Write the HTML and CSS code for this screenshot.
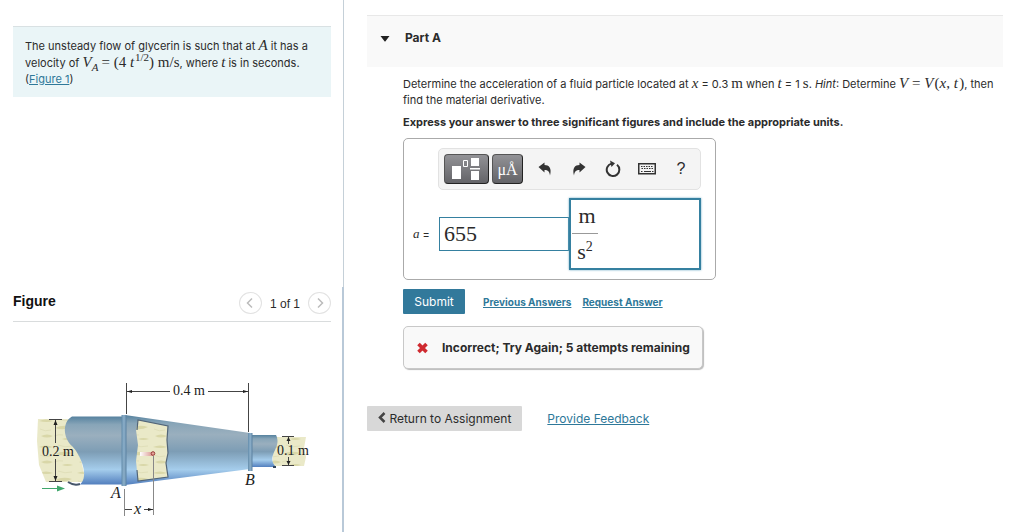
FILE: index.html
```html
<!DOCTYPE html>
<html lang="en">
<head>
    <meta charset="UTF-8">
    <meta name="viewport" content="width=device-width, initial-scale=1.0">
    <title>Part A - Unsteady flow of glycerin</title>
    <link rel="stylesheet" href="styles.css">
</head>
<body>

    <aside class="sidebar">
        <section class="intro-pane">
            <div class="intro">
                <p>The unsteady flow of glycerin is such that at <i class="math">A</i> it has a velocity of <i class="math">V<sub>A</sub></i> <span class="math">= (4&#8197;<i>t</i><sup>&#8202;1/2</sup>) m/s</span>, where <i class="math">t</i> is in seconds.</p>
                <p>(<a href="#figure">Figure 1</a>)</p>
            </div>
        </section>

        <section class="figure-pane" id="figure">
            <div class="figure-header">
                <h2>Figure</h2>
                <div class="pager">
                    <button type="button" aria-label="Previous figure">
                        <svg width="10" height="12" viewBox="0 0 10 12"><path d="M7 1.5 2.5 6 7 10.5"/></svg>
                    </button>
                    <span>1 of 1</span>
                    <button type="button" aria-label="Next figure">
                        <svg width="10" height="12" viewBox="0 0 10 12"><path d="M3 1.5 7.5 6 3 10.5"/></svg>
                    </button>
                </div>
            </div>

            <svg class="pipe" viewBox="13 322 318 200" role="img" aria-label="Tapered pipe from A to B">
                <defs>
                    <linearGradient id="steel" x1="0" y1="0" x2="0" y2="1">
                        <stop offset="0" stop-color="#56829f"/>
                        <stop offset="0.12" stop-color="#88a5b8"/>
                        <stop offset="0.28" stop-color="#9aafbe"/>
                        <stop offset="0.52" stop-color="#7d9db5"/>
                        <stop offset="0.78" stop-color="#a5cdec"/>
                        <stop offset="1" stop-color="#527fbe"/>
                    </linearGradient>
                    <linearGradient id="flange" x1="0" y1="0" x2="1" y2="0">
                        <stop offset="0" stop-color="#638cab"/>
                        <stop offset="0.5" stop-color="#8db0ca"/>
                        <stop offset="1" stop-color="#5b82a2"/>
                    </linearGradient>
                    <linearGradient id="trail" x1="0" y1="0" x2="1" y2="0">
                        <stop offset="0" stop-color="#fff"/>
                        <stop offset="1" stop-color="#d9958c"/>
                    </linearGradient>
                    <pattern id="fluid" width="38" height="26" patternUnits="userSpaceOnUse">
                        <rect width="38" height="26" fill="#eae9c8"/>
                        <path d="M1 5q7-3 14 0q-6 2-14 0M17 12q8-4 17-1q-8 4-17 1M3 20q6-3 12 0q-6 3-12 0M24 23q5-2 11 0q-6 2-11 0" fill="#d9d7a8"/>
                        <path d="M20 3q7 3 14 1M2 13q5 3 11 1M16 20q5-2 9-1" fill="none" stroke="#e0dfb9"/>
                    </pattern>
                </defs>

                <!-- inlet -->
                <path d="M38 419H72L86 482H46L39 465L37 441Z" fill="url(#fluid)"/>
                <path d="M68 482q6 4 12 2" fill="none" stroke="#46566b" stroke-width="2"/>
                <path d="M72 416.500H123V484.500H80C90 476 80 454 72 446C63 438 62 422 72 416.500Z" fill="url(#steel)"/>

                <!-- taper -->
                <path d="M125 415L250 433V469L125 485Z" fill="url(#steel)"/>
                <path d="M138 420L168 426L167 440L168 453L166 463L168 477L138 481L136 461L138 445L136 430Z" fill="url(#fluid)"/>
                <path d="M137 430L138 420L168 426L167 440L168 453L166 463L168 477L138 481L137 470" fill="none" stroke="#526578" stroke-width="1.200"/>
                <rect x="121.500" y="415" width="5" height="71" fill="url(#flange)"/>

                <!-- outlet -->
                <path d="M274 437H306L304 448L306 457L304 466H272Z" fill="url(#fluid)"/>
                <path d="M252 435H276C280 443 275 449 273 455C271 460 273 464 276 467H252Z" fill="url(#steel)"/>
                <path d="M273 467h3" stroke="#34465c" stroke-width="2"/>
                <rect x="248" y="433" width="4.500" height="38" fill="url(#flange)"/>

                <!-- fluid particle -->
                <rect x="140" y="452" width="13" height="4" fill="url(#trail)"/>
                <circle cx="153" cy="453.500" r="1.800" fill="#e7a49c" stroke="#983b35"/>

                <!-- dimension lines -->
                <g fill="none" stroke="#444">
                    <path d="M126.500 383V414M248.500 383V432M127 391.500H170M208 391.500H248"/>
                    <path d="M49 419.500H62M49 481.500H62M55.500 420V443M55.500 459V481"/>
                    <path d="M282 436.500H294M282 465.500H294M288.500 437V444M288.500 457V465"/>
                    <path d="M124.500 489V516M153.500 456V515" stroke="#888"/>
                    <path d="M125 509.500H132M144 509.500H153"/>
                </g>
                <path d="M127 391.500l5-1.500v3zM248 391.500l-5-1.500v3zM55.500 420l-2 5h4zM55.500 481l-2-5h4zM288.500 437l-2 4h4zM288.500 465l-2-4h4zM153 509.500l-5-1.500v3z" fill="#222"/>
                <path d="M42 488.500H58" stroke="#3fa66b"/>
                <path d="M65 488.500l-8-3v6z" fill="#3fa66b"/>

                <g class="labels">
                    <text x="173" y="395">0.4 m</text>
                    <text x="42" y="456">0.2 m</text>
                    <text x="277" y="455">0.1 m</text>
                    <text class="point" x="111" y="498">A</text>
                    <text class="point" x="245" y="485">B</text>
                    <text class="point" x="134" y="514">x</text>
                </g>
            </svg>
        </section>
    </aside>

    <main class="content">
        <header class="part-header">
            <button type="button" aria-label="Collapse part">
                <svg width="10" height="6" viewBox="0 0 10 6"><path d="M0.500 0H9.500L5.700 5Q5 6 4.300 5Z" fill="#222"/></svg>
            </button>
            <h1>Part A</h1>
        </header>

        <div class="part-body">
            <p class="question">Determine the acceleration of a fluid particle located at <i class="math">x</i> = 0.3 <span class="math">m</span> when <i class="math">t</i> = 1 <span class="math">s</span>. <em>Hint</em>: Determine <span class="math"><i>V</i> = <i>V</i>&#8202;(<i>x</i>, <i>t</i>&#8202;)</span>, then find the material derivative.</p>
            <p class="instructions">Express your answer to three significant figures and include the appropriate units.</p>

            <div class="answer-box">
                <div class="toolbar">
                    <button type="button" class="dark templates" aria-label="Templates">
                        <svg width="30" height="24" viewBox="0 0 30 24">
                            <path d="M0 9h9v13H0zM19 1h8v8h-8zM19 14h8v9h-8zM18 11h10v1.500H18z" fill="#fff"/>
                            <path d="M11.500 3.500h4v6h-4z" fill="none" stroke="#fff"/>
                        </svg>
                    </button>
                    <button type="button" class="dark symbols" aria-label="Symbols">μÅ</button>
                    <div class="tools">
                        <button type="button" aria-label="Undo">
                            <svg width="14" height="14" viewBox="0 0 14 14"><path d="M0.500 5L6.500 0.500V3C11 3 14 6 12 13.500C11.500 9.500 10 8 6.500 8V10.500Z" fill="#333"/></svg>
                        </button>
                        <button type="button" aria-label="Redo">
                            <svg width="14" height="14" viewBox="0 0 14 14"><path d="M13.500 5L7.500 0.500V3C3 3 0 6 2 13.500C2.500 9.500 4 8 7.500 8V10.500Z" fill="#333"/></svg>
                        </button>
                        <button type="button" aria-label="Reset">
                            <svg width="16" height="18" viewBox="0 0 16 18"><path d="M12 4.800A6.300 6.300 0 1 1 6.500 3.600" fill="none" stroke="#333" stroke-width="2"/><path d="M5 0.500L10 3.200L6.500 7Z" fill="#333"/></svg>
                        </button>
                        <button type="button" aria-label="Keyboard">
                            <svg width="18" height="12" viewBox="0 0 18 12"><path d="M0.750 0.750h16.500v10H0.750z" fill="none" stroke="#333" stroke-width="1.500"/><path d="M3 3.500h12M3.500 5.500h12" stroke="#333" stroke-dasharray="1.500 1"/><path d="M3 8.500h1.500M6 8.500h7M14 8.500h1.500" stroke="#333"/></svg>
                        </button>
                        <button type="button" class="help" aria-label="Help">?</button>
                    </div>
                </div>
                <div class="entry">
                    <label for="value"><i>a</i> =</label>
                    <input type="text" id="value" value="655">
                    <div class="units" contenteditable="true" role="textbox" aria-label="Units">
                        <span class="fraction"><span class="top">m</span><span class="bottom">s<sup>2</sup></span></span>
                    </div>
                </div>
            </div>

            <div class="actions">
                <button type="button" class="submit">Submit</button>
                <a href="#previous">Previous Answers</a>
                <a href="#request">Request Answer</a>
            </div>

            <div class="feedback">
                <svg width="13" height="12" viewBox="0 0 13 12"><path d="M2.500 2L10.500 10M10.500 2L2.500 10" stroke="#cf2a30" stroke-width="3.600"/></svg>
                <strong>Incorrect; Try Again; 5 attempts remaining</strong>
            </div>
        </div>

        <footer class="page-footer">
            <button type="button">
                <svg width="8" height="11" viewBox="0 0 8 11"><path d="M6.500 1L2 5.500L6.500 10" fill="none" stroke="#444" stroke-width="2.500"/></svg>
                Return to Assignment
            </button>
            <a href="#feedback">Provide Feedback</a>
        </footer>
    </main>

</body>
</html>
```
FILE: styles.css
```css
* {
    box-sizing: border-box;
}
body {
    margin: 0;
    display: flex;
    min-height: 100vh;
    font-family: Inter, "Liberation Sans", Arial, sans-serif;
    font-size: 11px;
    line-height: 16px;
    color: #2b2b2b;
    background: white;
}
h1, h2, p {
    margin: 0;
}
a {
    color: #2e7899;
}
button {
    font-family: inherit;
    color: inherit;
    padding: 0;
    border: none;
    background: none;
    cursor: pointer;
}
.math {
    font-family: "Liberation Serif", "Times New Roman", serif;
    font-size: 15px;
    word-spacing: normal;
}
.math sub, .math sup {
    font-size: 11px;
    line-height: 0;
}

/* left side */
.sidebar {
    flex: 0 0 344px;
    display: flex;
    flex-direction: column;
}
.intro-pane {
    min-height: 54vh;
    padding: 26px 12px 0 13px;
    border-right: 1px solid #c5d0d8;
}
.intro {
    padding: 10px 12px;
    border-top: 1px solid #d9e1e3;
    background: #eaf5f7;
}
.figure-pane {
    flex: 1;
    padding: 0 11px 0 13px;
    border-right: 2px solid #b9c9d8;
}
.figure-header {
    display: flex;
    justify-content: space-between;
    align-items: center;
    height: 35px;
    padding-bottom: 6px;
    border-bottom: 1px solid #d9dcdd;
    font-family: "Liberation Sans", Arial, sans-serif;
}
.figure-header h2 {
    font-size: 14px;
    color: #111;
}
.pager {
    display: flex;
    align-items: center;
    gap: 8px;
    padding-top: 4px;
    font-size: 12px;
}
.pager span {
    padding-top: 2px;
}
.pager button {
    display: flex;
    align-items: center;
    justify-content: center;
    width: 23px;
    height: 22px;
    border: 1px solid #e2e2e2;
    border-radius: 50%;
}
.pager path {
    fill: none;
    stroke: #bbb;
    stroke-width: 1.5;
}
.pipe {
    display: block;
    width: 100%;
}
.labels {
    font-family: "Liberation Serif", "Times New Roman", serif;
    font-size: 14px;
    fill: #222;
}
.point {
    font-size: 16px;
    font-style: italic;
}

/* right side */
.content {
    flex: 1;
    padding: 15px 21px 0 23px;
}
.part-header {
    display: flex;
    align-items: flex-start;
    gap: 15px;
    height: 52px;
    padding: 14px 13px;
    border-top: 1px solid #e8e8e8;
    background: #f9f9f9;
}
.part-header button {
    height: 14px;
    line-height: 10px;
}
.part-header h1 {
    font-size: 12px;
    line-height: 16px;
}
.part-body {
    padding: 8px 0 0 36px;
}
.instructions {
    margin: 6px 0 8px;
    font-weight: bold;
}
.answer-box {
    width: 313px;
    padding: 9px 14px 9px 9px;
    border: 1px solid #aaa;
    border-radius: 5px;
}
.toolbar {
    display: flex;
    align-items: center;
    gap: 3px;
    margin-left: 25px;
    padding: 5px;
    border: 1px solid #e2e2e2;
    border-radius: 5px;
    background: #f4f4f4;
}
.dark {
    display: flex;
    align-items: center;
    justify-content: center;
    height: 30px;
    border: 1px solid #555;
    border-right-color: #222;
    border-bottom-color: #222;
    border-radius: 4px;
    background: linear-gradient(#929296, #636367);
    color: white;
}
.templates {
    width: 45px;
}
.symbols {
    width: 31px;
    padding-top: 2px;
    font-family: "Liberation Serif", "Times New Roman", serif;
    font-size: 16px;
}
.tools {
    flex: 1;
    display: flex;
    justify-content: space-between;
    padding: 0 2px 0 7px;
}
.tools button {
    display: flex;
    align-items: center;
    justify-content: center;
    width: 24px;
    height: 24px;
}
.tools .help {
    font-family: "Liberation Sans", Arial, sans-serif;
    font-size: 16px;
}
.entry {
    display: flex;
    align-items: center;
    margin-top: 8px;
}
.entry label {
    width: 26px;
    white-space: nowrap;
}
.entry label i {
    font-family: "Liberation Serif", "Times New Roman", serif;
    font-size: 13px;
}
.entry input {
    width: 130px;
    height: 34px;
    padding: 0 4px;
    border: 1px solid #3580a0;
    font-family: "Liberation Serif", "Times New Roman", serif;
    font-size: 22px;
    color: #2b2b2b;
}
.units {
    flex: 1;
    height: 72px;
    padding: 5px 1px;
    border: 2px solid #3580a0;
    box-shadow: 0 0 2px #6aa8c4;
    font-family: "Liberation Serif", "Times New Roman", serif;
    font-size: 22px;
}
.fraction {
    display: inline-flex;
    flex-direction: column;
    width: 26px;
    text-align: center;
}
.top {
    padding: 0 0 6px 4px;
    border-bottom: 1px solid #999;
    line-height: 22px;
}
.bottom {
    padding-top: 6px;
    line-height: 24px;
}
.bottom sup {
    font-size: 14px;
    line-height: 0;
}
.actions {
    display: flex;
    align-items: center;
    gap: 11px;
    margin: 9px 0 12px;
}
.actions a {
    font-size: 10px;
    font-weight: bold;
}
.submit {
    width: 62px;
    height: 25px;
    margin-right: 7px;
    border-radius: 1px;
    background: #32799b;
    color: white;
    font-size: 12px;
}
.feedback {
    display: inline-flex;
    align-items: center;
    gap: 13px;
    height: 43px;
    padding: 0 12px;
    border: 1px solid #c8c8c8;
    border-radius: 5px;
    background: #f9f9f9;
    box-shadow: 1px 1px 1px #bbb;
    font-size: 12px;
}
.page-footer {
    display: flex;
    align-items: center;
    gap: 25px;
    margin-top: 37px;
    font-size: 12px;
}
.page-footer button {
    height: 25px;
    padding: 0 11px;
    border-radius: 1px;
    background: #d8d8d8;
    font-size: 12px;
}
```
